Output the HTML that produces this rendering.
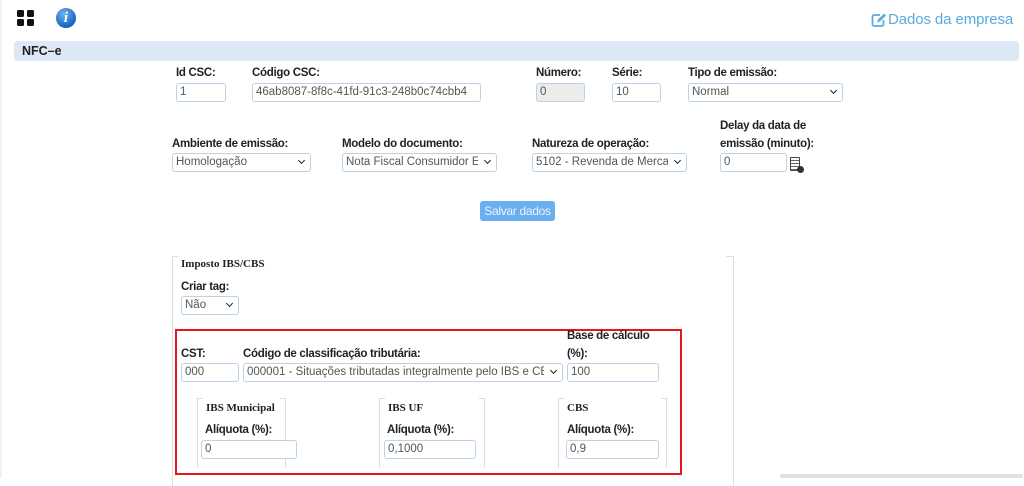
<!DOCTYPE html>
<html><head><meta charset="utf-8"><style>
*{box-sizing:border-box;margin:0;padding:0}
body{width:1024px;height:478px;overflow:hidden;background:#fff;font-family:"Liberation Sans",sans-serif;position:relative;color:#222}
.a{position:absolute}
.l{position:absolute;font-size:11.5px;font-weight:bold;color:#222;white-space:nowrap;letter-spacing:-0.3px}
.i{position:absolute;height:19px;border:1px solid #b9d3ea;border-radius:3px;font-size:11.5px;color:#555;padding:2px 3px;line-height:13px;white-space:nowrap;overflow:hidden;background:#fff}
.i span{display:block;overflow:hidden;white-space:nowrap}
.s{padding-right:18px}
.s::after{content:"";position:absolute;right:6px;top:4px;width:4px;height:4px;border-right:1.8px solid #222;border-bottom:1.8px solid #222;transform:rotate(45deg)}
.lg{position:absolute;font-family:"Liberation Serif",serif;font-weight:bold;font-size:11px;color:#222;white-space:nowrap}
.gap{position:absolute;height:3px;background:#fff}
.fs{position:absolute;border:1px solid #ddd;border-bottom:none}
</style></head><body>
<div class="a" style="left:0;top:0;width:2px;height:478px;background:#f3f3f3"></div>
<div class="a" style="left:17px;top:10px;width:7px;height:7px;background:#111;border-radius:1.5px"></div>
<div class="a" style="left:27px;top:10px;width:7px;height:7px;background:#111;border-radius:1.5px"></div>
<div class="a" style="left:17px;top:19px;width:7px;height:7px;background:#111;border-radius:1.5px"></div>
<div class="a" style="left:27px;top:19px;width:7px;height:7px;background:#111;border-radius:1.5px"></div>
<div class="a" style="left:56px;top:8px;width:20px;height:20px;border-radius:50%;background:radial-gradient(circle at 40% 30%,#6fb4f0,#1565c0 70%);color:#fff;font:italic bold 15px 'Liberation Serif',serif;text-align:center;line-height:20px">i</div>
<svg class="a" style="left:871px;top:12px" width="16" height="15" viewBox="0 0 16 15"><path d="M9 3H3a1.5 1.5 0 0 0-1.5 1.5v8A1.5 1.5 0 0 0 3 14h8a1.5 1.5 0 0 0 1.5-1.5V8" fill="none" stroke="#5aaae0" stroke-width="1.7"/><path d="M6 10.5l1-3L13 1.5l2 2-6 6z" fill="#5aaae0"/></svg>
<div class="a" style="left:888px;top:11px;font-size:15px;color:#5aaae0;white-space:nowrap;letter-spacing:-0.1px">Dados da empresa</div>
<div class="a" style="left:14px;top:41px;width:1005px;height:20px;background:#dce8f5;border-radius:4px"></div>
<div class="a" style="left:22px;top:44px;font-size:12.5px;font-weight:bold">NFC–e</div>
<div class="l" style="left:176px;top:67px">Id CSC:</div>
<div class="i" style="left:176px;top:83px;width:50px">1</div>
<div class="l" style="left:252px;top:67px">Código CSC:</div>
<div class="i" style="left:252px;top:83px;width:229px">46ab8087-8f8c-41fd-91c3-248b0c74cbb4</div>
<div class="l" style="left:536px;top:67px">Número:</div>
<div class="i" style="left:536px;top:83px;width:49px;background:#ececec">0</div>
<div class="l" style="left:612px;top:67px">Série:</div>
<div class="i" style="left:612px;top:83px;width:49px">10</div>
<div class="l" style="left:688px;top:67px">Tipo de emissão:</div>
<div class="i s" style="left:688px;top:83px;width:155px"><span>Normal</span></div>
<div class="l" style="left:172px;top:138px">Ambiente de emissão:</div>
<div class="i s" style="left:172px;top:153px;width:139px"><span>Homologação</span></div>
<div class="l" style="left:342px;top:138px">Modelo do documento:</div>
<div class="i s" style="left:342px;top:153px;width:155px"><span>Nota Fiscal Consumidor Eletrônica</span></div>
<div class="l" style="left:532px;top:138px">Natureza de operação:</div>
<div class="i s" style="left:532px;top:153px;width:155px"><span>5102 - Revenda de Mercadoria</span></div>
<div class="l" style="left:720px;top:120px">Delay da data de</div>
<div class="l" style="left:720px;top:138px">emissão (minuto):</div>
<div class="i" style="left:720px;top:153px;width:67px">0</div>
<div class="a" style="left:790px;top:157px;width:10px;height:14px;border:1.5px solid #444;border-radius:1px;background:repeating-linear-gradient(#fff 0 2px,#666 2px 3px)"></div>
<div class="a" style="left:797px;top:166px;width:7px;height:7px;border-radius:50%;background:#333"></div>
<div class="a" style="left:480px;top:201px;width:75px;height:20px;background:#6aaff0;border-radius:3px;color:#eaf4ff;font-size:12px;text-align:center;line-height:20px;letter-spacing:-0.3px">Salvar dados</div>
<div class="fs" style="left:172px;top:256px;width:562px;height:230px"></div>
<div class="gap" style="left:178px;top:255px;width:548px"></div>
<div class="lg" style="left:181px;top:258px">Imposto IBS/CBS</div>
<div class="l" style="left:181px;top:281px">Criar tag:</div>
<div class="i s" style="left:181px;top:296px;width:58px"><span>Não</span></div>
<div class="a" style="left:175px;top:329px;width:507px;height:146px;border:2px solid #e8161c"></div>
<div class="l" style="left:567px;top:330px">Base de cálculo</div>
<div class="l" style="left:567px;top:348px">(%):</div>
<div class="l" style="left:181px;top:348px">CST:</div>
<div class="l" style="left:243px;top:348px">Código de classificação tributária:</div>
<div class="i" style="left:181px;top:363px;width:58px">000</div>
<div class="i s" style="left:243px;top:363px;width:320px"><span>000001 - Situações tributadas integralmente pelo IBS e CBS</span></div>
<div class="i" style="left:567px;top:363px;width:92px">100</div>
<div class="fs" style="left:197px;top:398px;width:89px;height:70px"></div>
<div class="gap" style="left:203px;top:397px;width:77px"></div>
<div class="lg" style="left:206px;top:402px">IBS Municipal</div>
<div class="l" style="left:205px;top:424px">Alíquota (%):</div>
<div class="i" style="left:201px;top:440px;width:96px">0</div>
<div class="fs" style="left:379px;top:398px;width:106px;height:70px"></div>
<div class="gap" style="left:385px;top:397px;width:94px"></div>
<div class="lg" style="left:388px;top:402px">IBS UF</div>
<div class="l" style="left:387px;top:424px">Alíquota (%):</div>
<div class="i" style="left:384px;top:440px;width:92px">0,1000</div>
<div class="fs" style="left:558px;top:398px;width:109px;height:70px"></div>
<div class="gap" style="left:564px;top:397px;width:97px"></div>
<div class="lg" style="left:567px;top:402px">CBS</div>
<div class="l" style="left:567px;top:424px">Alíquota (%):</div>
<div class="i" style="left:566px;top:440px;width:93px">0,9</div>
<div class="a" style="left:780px;top:474px;width:243px;height:4px;background:#e2e2e2;border-radius:2px"></div>
</body></html>
